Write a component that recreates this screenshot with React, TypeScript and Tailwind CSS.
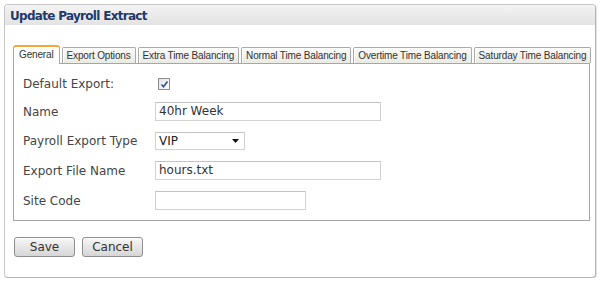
import React from 'react';

const tabs = [
  'General',
  'Export Options',
  'Extra Time Balancing',
  'Normal Time Balancing',
  'Overtime Time Balancing',
  'Saturday Time Balancing',
];

function TextBox({ value, width }: { value?: string; width: string }) {
  return (
    <div
      className={`${width} h-[19px] border border-[#d2d2d2] border-t-[#c2c2c2] bg-white pl-[3px] text-[12px] leading-[17px] text-[#333]`}
    >
      {value}
    </div>
  );
}

function Row({ label, children, className }: { label: string; children: React.ReactNode; className: string }) {
  return (
    <div className={`flex items-center ${className}`}>
      <div className="w-[132px] text-[12px] text-[#454545]">{label}</div>
      {children}
    </div>
  );
}

export default function App() {
  return (
    <div className="pl-[4px] pt-[4px] font-['DejaVu_Sans',sans-serif]">
      <div className="w-[592px] h-[274px] rounded-[4px] border border-[#c6c6c6] border-r-[#b4b4b4] border-b-[#b4b4b4] bg-white overflow-hidden shadow-[1px_1px_1px_rgba(0,0,0,0.12)]">
        <div className="h-[20px] bg-gradient-to-b from-[#f3f3f3] to-[#e3e3e3] pl-[5px] text-[12px] font-bold leading-[22px] tracking-[-0.7px] text-[#1d3a6a]">
          Update Payroll Extract
        </div>

        <div className="pl-[8px] pr-[5px] pt-[20px]">
          <div className="flex h-[18px] items-end gap-[2px] whitespace-nowrap font-['Liberation_Sans',Arial,sans-serif] text-[10px] tracking-[-0.15px] text-[#333]">
            {tabs.map((t, i) =>
              i === 0 ? (
                <div
                  key={t}
                  className="relative z-10 -mb-px h-[19px] shrink-0 rounded-t-[3px] border border-b-0 border-[#a8a8a8] border-t-[#f0a83c] border-t-2 bg-white px-[5px] leading-[15px]"
                >
                  {t}
                </div>
              ) : (
                <div
                  key={t}
                  className="h-[16px] shrink-0 rounded-t-[2px] border border-b-0 border-[#aaaaaa] bg-gradient-to-b from-[#fafaf7] to-[#ebebe5] px-[4px] leading-[15px] shadow-[inset_1px_1px_0_#ffffff]"
                >
                  {t}
                </div>
              )
            )}
          </div>

          <div className="h-[158px] border border-[#a6a6a6] pl-[9px] pt-[10px]">
            <Row label="Default Export:" className="h-[20px]">
              <div className="ml-[3px] flex h-[12px] w-[12px] items-center justify-center border border-[#8c8c8c] bg-gradient-to-br from-[#e2e4ea] to-[#fbfbfb]">
                <svg width="9" height="9" viewBox="0 0 9 9">
                  <path d="M1.5 4.5 L3.5 6.8 L7.5 1.5" fill="none" stroke="#34508a" strokeWidth="1.6" />
                </svg>
              </div>
            </Row>
            <Row label="Name" className="mt-[8px]">
              <TextBox value="40hr Week" width="w-[226px]" />
            </Row>
            <Row label="Payroll Export Type" className="mt-[11px]">
              <div className="flex h-[18px] w-[90px] items-center justify-between border border-[#d2d2d2] border-t-[#c4c4c4] bg-white pl-[3px] pr-[5px] text-[12px] text-[#222]">
                <span>VIP</span>
                <svg width="7" height="4" viewBox="0 0 7 4">
                  <path d="M0 0 H7 L3.5 4 Z" fill="#111" />
                </svg>
              </div>
            </Row>
            <Row label="Export File Name" className="mt-[11px]">
              <TextBox value="hours.txt" width="w-[226px]" />
            </Row>
            <Row label="Site Code" className="mt-[11px]">
              <TextBox width="w-[151px]" />
            </Row>
          </div>
        </div>

        <div className="ml-[9px] mt-[16px] flex gap-[7px]">
          {['Save', 'Cancel'].map((b) => (
            <button
              key={b}
              className="h-[20px] w-[61px] rounded-[3px] border border-[#8e8e8e] bg-gradient-to-b from-[#f7f7f7] to-[#d6d6d6] text-[12px] leading-[18px] text-[#333] shadow-[inset_0_1px_0_#ffffff]"
            >
              {b}
            </button>
          ))}
        </div>
      </div>
    </div>
  );
}
